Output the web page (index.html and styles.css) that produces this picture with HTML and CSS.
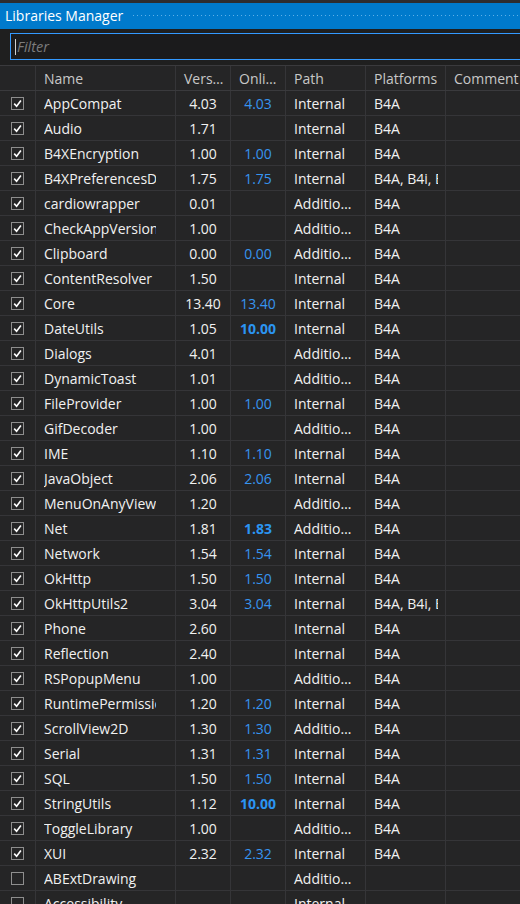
FILE: index.html
```html
<!DOCTYPE html>
<html>
<head>
<meta charset="utf-8">
<link rel="stylesheet" href="styles.css">
</head>
<body>
<div class="topstrip"></div>
<div class="titlebar">
  <span class="title">Libraries Manager</span>
  <svg class="dots" height="5" width="100%"><defs><pattern id="dp" width="4" height="4" patternUnits="userSpaceOnUse"><rect x="0" y="0" width="1" height="1" fill="#5fb0e8"/></pattern></defs><rect x="0" y="0" width="100%" height="1" fill="url(#dp)"/><rect x="2" y="3" width="100%" height="1" fill="url(#dp)"/></svg>
</div>
<div class="filterwrap">
  <div class="filter"><span class="caret"></span><span class="ph">Filter</span></div>
</div>
<div class="grid">
  <div class="row head">
    <div class="c chk"></div>
    <div class="c h">Name</div>
    <div class="c h">Version</div>
    <div class="c h">Online</div>
    <div class="c h">Path</div>
    <div class="c h">Platforms</div>
    <div class="c h">Comment</div>
  </div>
  <div class="row"><div class="c chk"><span class="cb"><svg viewBox="0 0 13 13"><path d="M3.2 6.6 L5.6 9.2 L9.9 3.4"/></svg></span></div><div class="c name"><span>AppCompat</span></div><div class="c ver">4.03</div><div class="c onl">4.03</div><div class="c path">Internal</div><div class="c plat"><span>B4A</span></div><div class="c cmt"></div></div>
  <div class="row"><div class="c chk"><span class="cb"><svg viewBox="0 0 13 13"><path d="M3.2 6.6 L5.6 9.2 L9.9 3.4"/></svg></span></div><div class="c name"><span>Audio</span></div><div class="c ver">1.71</div><div class="c onl"></div><div class="c path">Internal</div><div class="c plat"><span>B4A</span></div><div class="c cmt"></div></div>
  <div class="row"><div class="c chk"><span class="cb"><svg viewBox="0 0 13 13"><path d="M3.2 6.6 L5.6 9.2 L9.9 3.4"/></svg></span></div><div class="c name"><span>B4XEncryption</span></div><div class="c ver">1.00</div><div class="c onl">1.00</div><div class="c path">Internal</div><div class="c plat"><span>B4A</span></div><div class="c cmt"></div></div>
  <div class="row"><div class="c chk"><span class="cb"><svg viewBox="0 0 13 13"><path d="M3.2 6.6 L5.6 9.2 L9.9 3.4"/></svg></span></div><div class="c name"><span>B4XPreferencesDialog</span></div><div class="c ver">1.75</div><div class="c onl">1.75</div><div class="c path">Internal</div><div class="c plat"><span>B4A, B4i, B4J</span></div><div class="c cmt"></div></div>
  <div class="row"><div class="c chk"><span class="cb"><svg viewBox="0 0 13 13"><path d="M3.2 6.6 L5.6 9.2 L9.9 3.4"/></svg></span></div><div class="c name"><span>cardiowrapper</span></div><div class="c ver">0.01</div><div class="c onl"></div><div class="c path">Additional</div><div class="c plat"><span>B4A</span></div><div class="c cmt"></div></div>
  <div class="row"><div class="c chk"><span class="cb"><svg viewBox="0 0 13 13"><path d="M3.2 6.6 L5.6 9.2 L9.9 3.4"/></svg></span></div><div class="c name"><span>CheckAppVersion</span></div><div class="c ver">1.00</div><div class="c onl"></div><div class="c path">Additional</div><div class="c plat"><span>B4A</span></div><div class="c cmt"></div></div>
  <div class="row"><div class="c chk"><span class="cb"><svg viewBox="0 0 13 13"><path d="M3.2 6.6 L5.6 9.2 L9.9 3.4"/></svg></span></div><div class="c name"><span>Clipboard</span></div><div class="c ver">0.00</div><div class="c onl">0.00</div><div class="c path">Additional</div><div class="c plat"><span>B4A</span></div><div class="c cmt"></div></div>
  <div class="row"><div class="c chk"><span class="cb"><svg viewBox="0 0 13 13"><path d="M3.2 6.6 L5.6 9.2 L9.9 3.4"/></svg></span></div><div class="c name"><span>ContentResolver</span></div><div class="c ver">1.50</div><div class="c onl"></div><div class="c path">Internal</div><div class="c plat"><span>B4A</span></div><div class="c cmt"></div></div>
  <div class="row"><div class="c chk"><span class="cb"><svg viewBox="0 0 13 13"><path d="M3.2 6.6 L5.6 9.2 L9.9 3.4"/></svg></span></div><div class="c name"><span>Core</span></div><div class="c ver">13.40</div><div class="c onl">13.40</div><div class="c path">Internal</div><div class="c plat"><span>B4A</span></div><div class="c cmt"></div></div>
  <div class="row"><div class="c chk"><span class="cb"><svg viewBox="0 0 13 13"><path d="M3.2 6.6 L5.6 9.2 L9.9 3.4"/></svg></span></div><div class="c name"><span>DateUtils</span></div><div class="c ver">1.05</div><div class="c onl new">10.00</div><div class="c path">Internal</div><div class="c plat"><span>B4A</span></div><div class="c cmt"></div></div>
  <div class="row"><div class="c chk"><span class="cb"><svg viewBox="0 0 13 13"><path d="M3.2 6.6 L5.6 9.2 L9.9 3.4"/></svg></span></div><div class="c name"><span>Dialogs</span></div><div class="c ver">4.01</div><div class="c onl"></div><div class="c path">Additional</div><div class="c plat"><span>B4A</span></div><div class="c cmt"></div></div>
  <div class="row"><div class="c chk"><span class="cb"><svg viewBox="0 0 13 13"><path d="M3.2 6.6 L5.6 9.2 L9.9 3.4"/></svg></span></div><div class="c name"><span>DynamicToast</span></div><div class="c ver">1.01</div><div class="c onl"></div><div class="c path">Additional</div><div class="c plat"><span>B4A</span></div><div class="c cmt"></div></div>
  <div class="row"><div class="c chk"><span class="cb"><svg viewBox="0 0 13 13"><path d="M3.2 6.6 L5.6 9.2 L9.9 3.4"/></svg></span></div><div class="c name"><span>FileProvider</span></div><div class="c ver">1.00</div><div class="c onl">1.00</div><div class="c path">Internal</div><div class="c plat"><span>B4A</span></div><div class="c cmt"></div></div>
  <div class="row"><div class="c chk"><span class="cb"><svg viewBox="0 0 13 13"><path d="M3.2 6.6 L5.6 9.2 L9.9 3.4"/></svg></span></div><div class="c name"><span>GifDecoder</span></div><div class="c ver">1.00</div><div class="c onl"></div><div class="c path">Additional</div><div class="c plat"><span>B4A</span></div><div class="c cmt"></div></div>
  <div class="row"><div class="c chk"><span class="cb"><svg viewBox="0 0 13 13"><path d="M3.2 6.6 L5.6 9.2 L9.9 3.4"/></svg></span></div><div class="c name"><span>IME</span></div><div class="c ver">1.10</div><div class="c onl">1.10</div><div class="c path">Internal</div><div class="c plat"><span>B4A</span></div><div class="c cmt"></div></div>
  <div class="row"><div class="c chk"><span class="cb"><svg viewBox="0 0 13 13"><path d="M3.2 6.6 L5.6 9.2 L9.9 3.4"/></svg></span></div><div class="c name"><span>JavaObject</span></div><div class="c ver">2.06</div><div class="c onl">2.06</div><div class="c path">Internal</div><div class="c plat"><span>B4A</span></div><div class="c cmt"></div></div>
  <div class="row"><div class="c chk"><span class="cb"><svg viewBox="0 0 13 13"><path d="M3.2 6.6 L5.6 9.2 L9.9 3.4"/></svg></span></div><div class="c name"><span>MenuOnAnyView</span></div><div class="c ver">1.20</div><div class="c onl"></div><div class="c path">Additional</div><div class="c plat"><span>B4A</span></div><div class="c cmt"></div></div>
  <div class="row"><div class="c chk"><span class="cb"><svg viewBox="0 0 13 13"><path d="M3.2 6.6 L5.6 9.2 L9.9 3.4"/></svg></span></div><div class="c name"><span>Net</span></div><div class="c ver">1.81</div><div class="c onl new">1.83</div><div class="c path">Additional</div><div class="c plat"><span>B4A</span></div><div class="c cmt"></div></div>
  <div class="row"><div class="c chk"><span class="cb"><svg viewBox="0 0 13 13"><path d="M3.2 6.6 L5.6 9.2 L9.9 3.4"/></svg></span></div><div class="c name"><span>Network</span></div><div class="c ver">1.54</div><div class="c onl">1.54</div><div class="c path">Internal</div><div class="c plat"><span>B4A</span></div><div class="c cmt"></div></div>
  <div class="row"><div class="c chk"><span class="cb"><svg viewBox="0 0 13 13"><path d="M3.2 6.6 L5.6 9.2 L9.9 3.4"/></svg></span></div><div class="c name"><span>OkHttp</span></div><div class="c ver">1.50</div><div class="c onl">1.50</div><div class="c path">Internal</div><div class="c plat"><span>B4A</span></div><div class="c cmt"></div></div>
  <div class="row"><div class="c chk"><span class="cb"><svg viewBox="0 0 13 13"><path d="M3.2 6.6 L5.6 9.2 L9.9 3.4"/></svg></span></div><div class="c name"><span>OkHttpUtils2</span></div><div class="c ver">3.04</div><div class="c onl">3.04</div><div class="c path">Internal</div><div class="c plat"><span>B4A, B4i, B4J</span></div><div class="c cmt"></div></div>
  <div class="row"><div class="c chk"><span class="cb"><svg viewBox="0 0 13 13"><path d="M3.2 6.6 L5.6 9.2 L9.9 3.4"/></svg></span></div><div class="c name"><span>Phone</span></div><div class="c ver">2.60</div><div class="c onl"></div><div class="c path">Internal</div><div class="c plat"><span>B4A</span></div><div class="c cmt"></div></div>
  <div class="row"><div class="c chk"><span class="cb"><svg viewBox="0 0 13 13"><path d="M3.2 6.6 L5.6 9.2 L9.9 3.4"/></svg></span></div><div class="c name"><span>Reflection</span></div><div class="c ver">2.40</div><div class="c onl"></div><div class="c path">Internal</div><div class="c plat"><span>B4A</span></div><div class="c cmt"></div></div>
  <div class="row"><div class="c chk"><span class="cb"><svg viewBox="0 0 13 13"><path d="M3.2 6.6 L5.6 9.2 L9.9 3.4"/></svg></span></div><div class="c name"><span>RSPopupMenu</span></div><div class="c ver">1.00</div><div class="c onl"></div><div class="c path">Additional</div><div class="c plat"><span>B4A</span></div><div class="c cmt"></div></div>
  <div class="row"><div class="c chk"><span class="cb"><svg viewBox="0 0 13 13"><path d="M3.2 6.6 L5.6 9.2 L9.9 3.4"/></svg></span></div><div class="c name"><span>RuntimePermissions</span></div><div class="c ver">1.20</div><div class="c onl">1.20</div><div class="c path">Internal</div><div class="c plat"><span>B4A</span></div><div class="c cmt"></div></div>
  <div class="row"><div class="c chk"><span class="cb"><svg viewBox="0 0 13 13"><path d="M3.2 6.6 L5.6 9.2 L9.9 3.4"/></svg></span></div><div class="c name"><span>ScrollView2D</span></div><div class="c ver">1.30</div><div class="c onl">1.30</div><div class="c path">Additional</div><div class="c plat"><span>B4A</span></div><div class="c cmt"></div></div>
  <div class="row"><div class="c chk"><span class="cb"><svg viewBox="0 0 13 13"><path d="M3.2 6.6 L5.6 9.2 L9.9 3.4"/></svg></span></div><div class="c name"><span>Serial</span></div><div class="c ver">1.31</div><div class="c onl">1.31</div><div class="c path">Internal</div><div class="c plat"><span>B4A</span></div><div class="c cmt"></div></div>
  <div class="row"><div class="c chk"><span class="cb"><svg viewBox="0 0 13 13"><path d="M3.2 6.6 L5.6 9.2 L9.9 3.4"/></svg></span></div><div class="c name"><span>SQL</span></div><div class="c ver">1.50</div><div class="c onl">1.50</div><div class="c path">Internal</div><div class="c plat"><span>B4A</span></div><div class="c cmt"></div></div>
  <div class="row"><div class="c chk"><span class="cb"><svg viewBox="0 0 13 13"><path d="M3.2 6.6 L5.6 9.2 L9.9 3.4"/></svg></span></div><div class="c name"><span>StringUtils</span></div><div class="c ver">1.12</div><div class="c onl new">10.00</div><div class="c path">Internal</div><div class="c plat"><span>B4A</span></div><div class="c cmt"></div></div>
  <div class="row"><div class="c chk"><span class="cb"><svg viewBox="0 0 13 13"><path d="M3.2 6.6 L5.6 9.2 L9.9 3.4"/></svg></span></div><div class="c name"><span>ToggleLibrary</span></div><div class="c ver">1.00</div><div class="c onl"></div><div class="c path">Additional</div><div class="c plat"><span>B4A</span></div><div class="c cmt"></div></div>
  <div class="row"><div class="c chk"><span class="cb"><svg viewBox="0 0 13 13"><path d="M3.2 6.6 L5.6 9.2 L9.9 3.4"/></svg></span></div><div class="c name"><span>XUI</span></div><div class="c ver">2.32</div><div class="c onl">2.32</div><div class="c path">Internal</div><div class="c plat"><span>B4A</span></div><div class="c cmt"></div></div>
  <div class="row"><div class="c chk"><span class="cb"></span></div><div class="c name"><span>ABExtDrawing</span></div><div class="c ver"></div><div class="c onl"></div><div class="c path">Additional</div><div class="c plat"></div><div class="c cmt"></div></div>
  <div class="row"><div class="c chk"><span class="cb"></span></div><div class="c name"><span>Accessibility</span></div><div class="c ver"></div><div class="c onl"></div><div class="c path">Internal</div><div class="c plat"></div><div class="c cmt"></div></div>
</div>
</body>
</html>
```
FILE: styles.css
```css
html, body {
  margin: 0;
  padding: 0;
}
body {
  width: 520px;
  height: 904px;
  overflow: hidden;
  background: #1f1f1f;
  font-family: "Open Sans", "Noto Sans", "Liberation Sans", sans-serif;
  font-size: 14px;
  color: #f1f1f1;
}
.topstrip {
  height: 3px;
  background: #2d2d30;
}
.titlebar {
  height: 26px;
  background: #007acc;
  display: flex;
  align-items: center;
  padding-left: 5px;
  overflow: hidden;
}
.title {
  color: #ffffff;
  font-size: 14px;
  white-space: nowrap;
  line-height: 28px;
}
.dots {
  flex: 1;
  margin-left: 10px;
  margin-top: 3px;
  display: block;
}
.filterwrap {
  padding: 4px 0 5px 10px;
}
.filter {
  width: 540px;
  height: 25px;
  border: 1px solid #3399ff;
  border-right: none;
  background: #1b1b1c;
  display: flex;
  align-items: center;
  padding-left: 4px;
}
.caret {
  width: 1px;
  height: 16px;
  background: #d0d0d0;
  margin-right: 1px;
}
.ph {
  color: #7c7c7c;
  font-style: italic;
  font-size: 14.5px;
  line-height: 26px;
}
.grid {
  width: 620px;
  background: #252526;
  border-top: 1px solid #3a3a3d;
}
.row {
  display: grid;
  grid-template-columns: 36px 140px 55px 55px 80px 80px 174px;
  height: 25px;
  border-bottom: 1px solid #353538;
  box-sizing: border-box;
}
.head {
  border-bottom: 1px solid #3a3a3d;
}
.c {
  border-right: 1px solid #353538;
  white-space: nowrap;
  overflow: hidden;
  line-height: 26px;
  box-sizing: border-box;
}
.h {
  color: #c8c8c8;
  padding: 0 6px 0 8px;
  text-overflow: ellipsis;
}
.chk {
  display: flex;
  align-items: center;
  padding-left: 11px;
}
.cb {
  width: 13px;
  height: 13px;
  box-sizing: border-box;
  border: 1px solid #8e8e8e;
  display: block;
  position: relative;
}
.cb svg {
  position: absolute;
  left: -1px;
  top: -1px;
  width: 13px;
  height: 13px;
}
.cb path {
  fill: none;
  stroke: #ffffff;
  stroke-width: 1.6;
}
.name {
  padding-left: 8px;
}
.name span {
  display: block;
  width: 112px;
  overflow: hidden;
}
.ver {
  text-align: center;
}
.onl {
  text-align: center;
  color: #3794ef;
}
.onl.new {
  font-weight: bold;
  color: #2b95f2;
}
.path {
  padding: 0 8px 0 8px;
  text-overflow: ellipsis;
}
.plat {
  padding-left: 8px;
}
.plat span {
  display: block;
  width: 64px;
  overflow: hidden;
}
```
